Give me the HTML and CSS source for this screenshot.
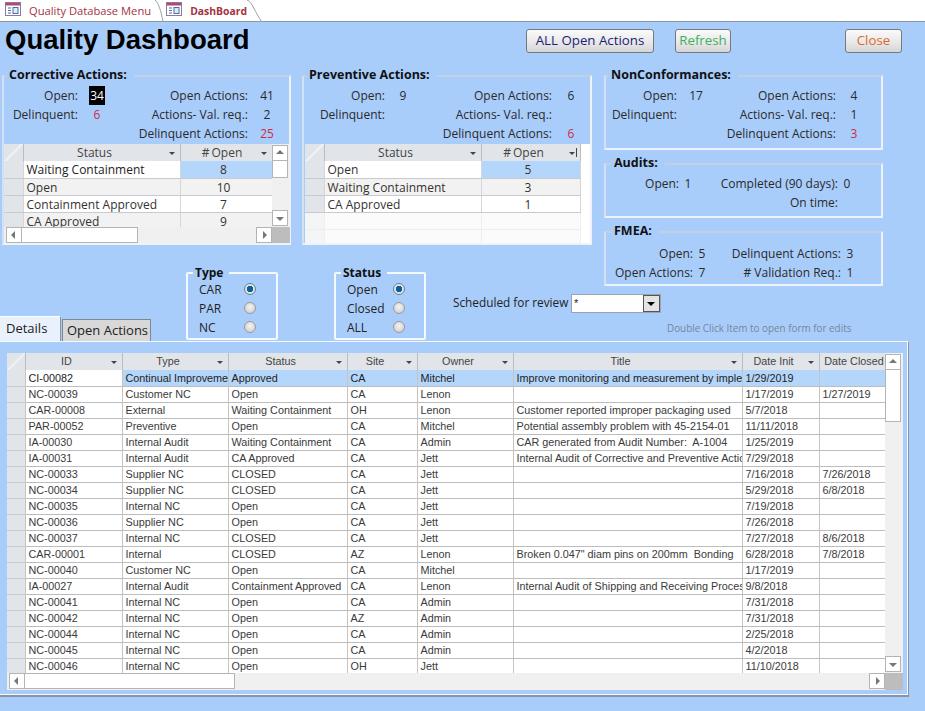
FILE: index.html
```html
<!DOCTYPE html>
<html lang="en">
<head>
<meta charset="utf-8">
<title>Quality Dashboard</title>
<link rel="stylesheet" href="styles.css">
</head>
<body>
<div class="app">
  <nav class="doctabs">
    <div class="doctab">
      <svg class="formicon" viewBox="0 0 16 14" width="16" height="14"><rect x="0.5" y="0.5" width="15" height="13" fill="#fff" stroke="#8a7a9e"/><rect x="1" y="1" width="14" height="2.5" fill="#b8476e"/><path d="M3 6h3M3 8.5h3M3 11h3" stroke="#4a6fa8"/><rect x="8" y="5.5" width="5" height="6" fill="#dfe8f5" stroke="#4a6fa8"/></svg>
      <span>Quality Database Menu</span>
      <svg class="tabcurve" viewBox="0 0 9 22" width="9" height="22"><path d="M0 0 C3 2 6 10 8 22" fill="none" stroke="#9aa0a8"/></svg>
    </div>
    <div class="doctab active">
      <svg class="formicon" viewBox="0 0 16 14" width="16" height="14"><rect x="0.5" y="0.5" width="15" height="13" fill="#fff" stroke="#8a7a9e"/><rect x="1" y="1" width="14" height="2.5" fill="#b8476e"/><path d="M3 6h3M3 8.5h3M3 11h3" stroke="#4a6fa8"/><rect x="8" y="5.5" width="5" height="6" fill="#dfe8f5" stroke="#4a6fa8"/></svg>
      <span>DashBoard</span>
      <svg class="tabcurve" viewBox="0 0 15 22" width="15" height="22"><path d="M0 0 C5 1 8 13 15 22" fill="none" stroke="#9aa0a8"/></svg>
    </div>
  </nav>

  <main class="form">
    <header class="formhead">
      <h1 class="title">Quality Dashboard</h1>
      <button class="btn btn-all">ALL Open Actions</button>
      <button class="btn btn-refresh">Refresh</button>
      <button class="btn btn-close">Close</button>
    </header>

    <section class="panels">
      <fieldset class="panel panel-ca">
        <legend>Corrective Actions:</legend>
        <div class="stats stats-ca">
          <span class="lab">Open:</span><span class="val"><b class="sel">34</b></span><span class="lab">Open Actions:</span><span class="val">41</span>
          <span class="lab">Delinquent:</span><span class="val red">6</span><span class="lab">Actions- Val. req.:</span><span class="val">2</span>
          <span></span><span></span><span class="lab">Delinquent Actions:</span><span class="val red">25</span>
        </div>
        <div class="minisheet with-scroll">
          <div class="miniclip">
            <table class="grid">
              <colgroup><col class="m-sel"><col class="m-status"><col class="m-open"></colgroup>
              <thead><tr><th class="corner-th"></th><th class="sort">Status</th><th class="sort narrow">#&#8201;Open</th></tr></thead>
              <tbody>
                <tr><td class="rowsel"></td><td class="strong">Waiting Containment</td><td class="num hl">8</td></tr>
                <tr class="alt"><td class="rowsel"></td><td>Open</td><td class="num">10</td></tr>
                <tr><td class="rowsel"></td><td>Containment Approved</td><td class="num">7</td></tr>
                <tr class="alt"><td class="rowsel"></td><td>CA Approved</td><td class="num">9</td></tr>
              </tbody>
            </table>
          </div>
          <div class="vbar">
            <i class="sbtn up"></i><i class="vthumb mini"></i><i class="vspace"></i><i class="sbtn down"></i>
          </div>
          <div class="hbar">
            <i class="sbtn left"></i><i class="hthumb mini"></i><i class="hspace"></i><i class="sbtn right"></i>
          </div>
          <i class="corner"></i>
        </div>
      </fieldset>

      <fieldset class="panel panel-pa">
        <legend>Preventive Actions:</legend>
        <div class="stats stats-pa">
          <span class="lab">Open:</span><span class="val">9</span><span class="lab">Open Actions:</span><span class="val">6</span>
          <span class="lab">Delinquent:</span><span class="val"></span><span class="lab">Actions- Val. req.:</span><span class="val"></span>
          <span></span><span></span><span class="lab">Delinquent Actions:</span><span class="val red">6</span>
        </div>
        <div class="minisheet plain">
          <table class="grid">
            <colgroup><col class="m-sel"><col class="m-status"><col class="m-open2"></colgroup>
            <thead><tr><th class="corner-th"></th><th class="sort">Status</th><th class="sort sorted">#&#8201;Open</th></tr></thead>
            <tbody>
              <tr><td class="rowsel"></td><td>Open</td><td class="num hl">5</td></tr>
              <tr class="alt"><td class="rowsel"></td><td>Waiting Containment</td><td class="num">3</td></tr>
              <tr><td class="rowsel"></td><td>CA Approved</td><td class="num">1</td></tr>
              <tr class="empty"><td class="rowsel-e"></td><td></td><td></td></tr>
              <tr class="empty"><td class="rowsel-e"></td><td></td><td></td></tr>
            </tbody>
          </table>
        </div>
      </fieldset>

      <div class="sidepanels">
        <fieldset class="panel panel-nc">
          <legend>NonConformances:</legend>
          <div class="stats stats-nc">
            <span class="lab">Open:</span><span class="val">17</span><span class="lab">Open Actions:</span><span class="val">4</span>
            <span class="lab">Delinquent:</span><span class="val"></span><span class="lab">Actions- Val. req.:</span><span class="val">1</span>
            <span></span><span></span><span class="lab">Delinquent Actions:</span><span class="val red">3</span>
          </div>
        </fieldset>
        <fieldset class="panel panel-au">
          <legend>Audits:</legend>
          <div class="stats stats-au">
            <span class="lab">Open:</span><span class="val">1</span><span class="lab">Completed (90 days):</span><span class="val">0</span>
            <span></span><span></span><span class="lab">On time:</span><span class="val"></span>
          </div>
        </fieldset>
        <fieldset class="panel panel-fm">
          <legend>FMEA:</legend>
          <div class="stats stats-fm">
            <span class="lab">Open:</span><span class="val">5</span><span class="lab">Delinquent Actions:</span><span class="val">3</span>
            <span class="lab">Open Actions:</span><span class="val">7</span><span class="lab"># Validation Req.:</span><span class="val">1</span>
          </div>
        </fieldset>
      </div>
    </section>

    <section class="filters">
      <div class="pagetabs">
        <div class="pagetab active">Details</div>
        <div class="pagetab">Open Actions</div>
      </div>
      <fieldset class="panel optgroup opt-type">
        <legend>Type</legend>
        <div class="opt"><span>CAR</span><i class="radio on"></i></div>
        <div class="opt"><span>PAR</span><i class="radio"></i></div>
        <div class="opt"><span>NC</span><i class="radio"></i></div>
      </fieldset>
      <fieldset class="panel optgroup opt-status">
        <legend>Status</legend>
        <div class="opt"><span>Open</span><i class="radio on"></i></div>
        <div class="opt"><span>Closed</span><i class="radio"></i></div>
        <div class="opt"><span>ALL</span><i class="radio"></i></div>
      </fieldset>
      <div class="review">
        <div class="reviewrow">
          <label class="reviewlab">Scheduled for review</label>
          <div class="combo"><span class="comboval">*</span><i class="combobtn"></i></div>
        </div>
        <p class="hint">Double Click Item to open form for edits</p>
      </div>
    </section>

    <section class="tabpage">
      <div class="sheet">
        <div class="sheetclip">
          <table class="grid data">
            <colgroup><col class="d-sel"><col class="d-id"><col class="d-type"><col class="d-status"><col class="d-site"><col class="d-owner"><col class="d-title"><col class="d-init"><col class="d-closed"></colgroup>
            <thead>
              <tr><th class="corner-th"></th><th class="sort">ID</th><th class="sort">Type</th><th class="sort">Status</th><th class="sort">Site</th><th class="sort">Owner</th><th class="sort">Title</th><th class="sort">Date Init</th><th class="closedhead">Date Closed</th></tr>
            </thead>
            <tbody>
              <tr class="current"><td class="rowsel"></td><td class="idcell">CI-00082</td><td>Continual Improvement</td><td>Approved</td><td>CA</td><td>Mitchel</td><td>Improve monitoring and measurement by implementing</td><td>1/29/2019</td><td></td></tr>
              <tr><td class="rowsel"></td><td>NC-00039</td><td>Customer NC</td><td>Open</td><td>CA</td><td>Lenon</td><td></td><td>1/17/2019</td><td>1/27/2019</td></tr>
              <tr><td class="rowsel"></td><td>CAR-00008</td><td>External</td><td>Waiting Containment</td><td>OH</td><td>Lenon</td><td>Customer reported improper packaging used</td><td>5/7/2018</td><td></td></tr>
              <tr><td class="rowsel"></td><td>PAR-00052</td><td>Preventive</td><td>Open</td><td>CA</td><td>Mitchel</td><td>Potential assembly problem with 45-2154-01</td><td>11/11/2018</td><td></td></tr>
              <tr><td class="rowsel"></td><td>IA-00030</td><td>Internal Audit</td><td>Waiting Containment</td><td>CA</td><td>Admin</td><td>CAR generated from Audit Number:&nbsp; A-1004</td><td>1/25/2019</td><td></td></tr>
              <tr><td class="rowsel"></td><td>IA-00031</td><td>Internal Audit</td><td>CA Approved</td><td>CA</td><td>Jett</td><td>Internal Audit of Corrective and Preventive Actions</td><td>7/29/2018</td><td></td></tr>
              <tr><td class="rowsel"></td><td>NC-00033</td><td>Supplier NC</td><td>CLOSED</td><td>CA</td><td>Jett</td><td></td><td>7/16/2018</td><td>7/26/2018</td></tr>
              <tr><td class="rowsel"></td><td>NC-00034</td><td>Supplier NC</td><td>CLOSED</td><td>CA</td><td>Jett</td><td></td><td>5/29/2018</td><td>6/8/2018</td></tr>
              <tr><td class="rowsel"></td><td>NC-00035</td><td>Internal NC</td><td>Open</td><td>CA</td><td>Jett</td><td></td><td>7/19/2018</td><td></td></tr>
              <tr><td class="rowsel"></td><td>NC-00036</td><td>Supplier NC</td><td>Open</td><td>CA</td><td>Jett</td><td></td><td>7/26/2018</td><td></td></tr>
              <tr><td class="rowsel"></td><td>NC-00037</td><td>Internal NC</td><td>CLOSED</td><td>CA</td><td>Jett</td><td></td><td>7/27/2018</td><td>8/6/2018</td></tr>
              <tr><td class="rowsel"></td><td>CAR-00001</td><td>Internal</td><td>CLOSED</td><td>AZ</td><td>Lenon</td><td>Broken 0.047" diam pins on 200mm&nbsp; Bonding</td><td>6/28/2018</td><td>7/8/2018</td></tr>
              <tr><td class="rowsel"></td><td>NC-00040</td><td>Customer NC</td><td>Open</td><td>CA</td><td>Mitchel</td><td></td><td>1/17/2019</td><td></td></tr>
              <tr><td class="rowsel"></td><td>IA-00027</td><td>Internal Audit</td><td>Containment Approved</td><td>CA</td><td>Lenon</td><td>Internal Audit of Shipping and Receiving Process</td><td>9/8/2018</td><td></td></tr>
              <tr><td class="rowsel"></td><td>NC-00041</td><td>Internal NC</td><td>Open</td><td>CA</td><td>Admin</td><td></td><td>7/31/2018</td><td></td></tr>
              <tr><td class="rowsel"></td><td>NC-00042</td><td>Internal NC</td><td>Open</td><td>AZ</td><td>Admin</td><td></td><td>7/31/2018</td><td></td></tr>
              <tr><td class="rowsel"></td><td>NC-00044</td><td>Internal NC</td><td>Open</td><td>CA</td><td>Admin</td><td></td><td>2/25/2018</td><td></td></tr>
              <tr><td class="rowsel"></td><td>NC-00045</td><td>Internal NC</td><td>Open</td><td>CA</td><td>Admin</td><td></td><td>4/2/2018</td><td></td></tr>
              <tr><td class="rowsel"></td><td>NC-00046</td><td>Internal NC</td><td>Open</td><td>OH</td><td>Jett</td><td></td><td>11/10/2018</td><td></td></tr>
            </tbody>
          </table>
        </div>
        <div class="vbar">
          <i class="sbtn up"></i><i class="vthumb big"></i><i class="vspace"></i><i class="sbtn down"></i>
        </div>
        <div class="hbar">
          <i class="sbtn left"></i><i class="hthumb big"></i><i class="hspace"></i><i class="sbtn right"></i>
        </div>
        <i class="corner"></i>
      </div>
    </section>
  </main>
</div>
</body>
</html>
```

FILE: styles.css
```css
* { box-sizing: border-box; }
html, body { margin: 0; padding: 0; }
body {
  width: 925px;
  height: 711px;
  overflow: hidden;
  background: #a9cdfb;
  font-family: "Open Sans", "Noto Sans", sans-serif;
  font-size: 12px;
  color: #222;
}
i { display: block; font-style: normal; }

/* document tabs */
.doctabs {
  height: 22px;
  display: flex;
  background: #fff;
  border-bottom: 1px solid #8c98a8;
}
.doctab {
  display: flex;
  align-items: center;
  height: 21px;
  padding-left: 5px;
  color: #a5323f;
  font-size: 11.2px;
  background: #fff;
}
.doctab span { margin-left: 8px; white-space: nowrap; }
.doctab .tabcurve { margin-left: 4px; flex: none; align-self: flex-start; }
.doctab.active { font-weight: 700; font-size: 10.4px; padding-left: 2px; }
.doctab.active .tabcurve { margin-left: 0; }
.formicon { flex: none; margin-top: -3px; }

/* form */
.form { display: block; }
.formhead {
  height: 45px;
  display: flex;
  align-items: flex-start;
  padding-top: 7px;
}
.title {
  flex: 0 0 526px;
  margin: 0;
  padding-left: 5px;
  font-family: "Liberation Sans", Arial, sans-serif;
  font-size: 27.5px;
  line-height: 22px;
  font-weight: 700;
  color: #000;
  white-space: nowrap;
}
.btn {
  height: 24px;
  padding: 0 0 2px;
  border: 1px solid #75797f;
  border-radius: 3px;
  background: linear-gradient(#fafafa, #ececec 45%, #d6d6d6);
  font-family: "Open Sans", "Noto Sans", sans-serif;
  font-size: 13.3px;
  line-height: 18px;
}
.btn-all { width: 128px; color: #1d1d78; }
.btn-refresh { width: 56px; margin-left: 21px; color: #3fb05c; }
.btn-close { width: 57px; margin-left: 114px; color: #dc6a2c; }

/* panels */
.panel {
  margin: 0;
  padding: 0;
  min-width: 0;
  border: 2px solid;
  border-color: #c3d0e2 #eef3fb #eef3fb #d3e0f2;
}
.panel legend {
  margin-left: 2px;
  padding: 0 7px 2px 3px;
  font-size: 12.5px;
  font-weight: 700;
  line-height: 16px;
  color: #111;
}
.panel-au legend, .panel-fm legend { margin-left: 5px; }
.panels {
  display: flex;
  align-items: flex-start;
  padding-left: 2px;
}
.panel-ca { width: 289px; height: 178px; }
.panel-pa { width: 290px; height: 178px; margin-left: 11px; }
.sidepanels {
  width: 279px;
  margin-left: 12px;
  display: flex;
  flex-direction: column;
}
.panel-nc { height: 83px; }
.panel-au { height: 63px; margin-top: 5px; }
.panel-fm { height: 63px; margin-top: 5px; }

.stats {
  display: grid;
  grid-auto-rows: 19px;
  align-items: center;
  padding-top: 1px;
  line-height: 19px;
  white-space: nowrap;
  color: #2a2a2a;
}
.stats-ca { grid-template-columns: 74px 38px 132px 38px; }
.stats-pa { grid-template-columns: 81px 36px 131px 38px; }
.stats-nc { grid-template-columns: 71px 38px 121px 36px; }
.stats-au { grid-template-columns: 73px 18px 141px 18px; }
.stats-fm { grid-template-columns: 87px 18px 130px 18px; padding-top: 3px; }
.lab { text-align: right; }
.val { display: block; text-align: center; }
.red { color: #d02a44; }
.sel {
  font-weight: 400;
  background: #000;
  color: #fff;
  padding: 1px;
}

/* data grids */
.grid {
  table-layout: fixed;
  border-collapse: collapse;
  width: 100%;
  font-size: 12px;
  color: #333;
}
.grid th {
  position: relative;
  height: 17px;
  padding: 0 14px 0 0;
  font-weight: 400;
  line-height: 15px;
  text-align: center;
  background: #e1e4e8;
  border-right: 1px solid #b9bcc0;
  color: #444;
}
.grid th.narrow { padding-right: 8px; }
.grid th.closedhead { padding: 0 0 0 4px; white-space: nowrap; }
.grid td {
  height: 17px;
  padding: 1px 3px 0;
  line-height: 15px;
  white-space: nowrap;
  overflow: hidden;
  border-bottom: 1px solid #c8cacd;
  border-right: 1px solid #d4d6d9;
  background: #fff;
}
.grid .alt td { background: #f2f2f2; }
.grid .alt td.rowsel, .grid td.rowsel { background: #e1e4e8; border-bottom-color: #c8cacd; padding: 0; }
.grid .num { text-align: center; padding-right: 8px; }
.grid td.hl { background: #b5d6fb; }
.grid .strong { color: #222; }
.corner-th {
  background: linear-gradient(135deg, #e1e4e8 45%, #f4f5f6 50%, #e1e4e8 58%) !important;
}
.sort::after {
  content: "";
  position: absolute;
  right: 5px;
  top: 8px;
  border: 3px solid transparent;
  border-top: 3px solid #444;
  border-bottom: 0;
}
.sorted::before {
  content: "";
  position: absolute;
  right: 3px;
  top: 4px;
  width: 1px;
  height: 9px;
  background: #444;
}
.empty td { background: #fbfbfb !important; border-bottom-color: #eee; border-right-color: #eee; height: 17px; }
.empty .rowsel-e { background: #f4f5f6 !important; }

col.m-sel { width: 19px; }
col.m-status { width: 157px; }
col.m-open { width: 92px; }
col.m-open2 { width: 99px; }

.minisheet { background: #f0f0f0; }
.with-scroll {
  margin-top: 1px;
  width: 286px;
  height: 99px;
  display: grid;
  grid-template-columns: 268px 18px;
  grid-template-rows: 83px 16px;
}
.miniclip { overflow: hidden; background: #fff; }
.plain {
  margin: 1px 0 0 1px;
  width: 285px;
  height: 99px;
  overflow: hidden;
  background: #fff;
}
.plain .grid { width: 275px; }

/* scrollbars */
.vbar {
  display: flex;
  flex-direction: column;
  background: #f0f0f0;
  padding: 1px 1px 1px 0;
}
.hbar {
  display: flex;
  background: #f0f0f0;
  padding: 0 0 1px 2px;
}
.vspace, .hspace { flex: 1; }
.sbtn {
  position: relative;
  flex: none;
  width: 16px;
  height: 16px;
  background: #fff;
  border: 1px solid #b4b4b4;
}
.sbtn::after {
  content: "";
  position: absolute;
  left: 50%;
  top: 50%;
  width: 0;
  height: 0;
}
.sbtn.up::after { margin: -3px 0 0 -4px; border: 4px solid transparent; border-bottom: 4px solid #777; border-top: 0; }
.sbtn.down::after { margin: -1px 0 0 -4px; border: 4px solid transparent; border-top: 4px solid #777; border-bottom: 0; }
.sbtn.left::after { margin: -4px 0 0 -3px; border: 4px solid transparent; border-right: 4px solid #777; border-left: 0; }
.sbtn.right::after { margin: -4px 0 0 -1px; border: 4px solid transparent; border-left: 4px solid #777; border-right: 0; }
.vthumb { width: 16px; background: #fff; border: 1px solid #b4b4b4; border-top: 0; }
.hthumb { height: 16px; background: #fff; border: 1px solid #b4b4b4; border-left: 0; }
.vthumb.mini { height: 17px; }
.hthumb.mini { width: 116px; }
.vthumb.big { height: 52px; }
.hthumb.big { width: 210px; }
.corner { background: #bdbdbd; }

/* filters */
.filters {
  display: flex;
  align-items: flex-start;
  margin-top: -21px;
  height: 76px;
}
.pagetabs {
  flex: 0 0 186px;
  display: flex;
  align-items: flex-end;
  height: 76px;
}
.pagetab {
  width: 89px;
  height: 22px;
  margin-left: 1px;
  padding-left: 4px;
  line-height: 21px;
  font-size: 13px;
  color: #222;
  background: #d8d8d8;
  border: 1px solid #7d8793;
  border-bottom: 0;
}
.pagetab.active {
  width: 61px;
  height: 25px;
  margin-left: 0;
  padding-left: 6px;
  line-height: 22px;
  background: #e9f1fc;
  border: 0;
  border-top: 1px solid #fff;
  border-right: 1px solid #8a94a0;
}
.panel.optgroup {
  width: 92px;
  height: 75px;
  border-color: #f4f8ff;
  border-radius: 2px;
}
.panel.optgroup legend {
  margin-left: 5px;
  padding: 0 6px 0 2px;
  font-size: 12px;
}
.opt-status { margin-left: 56px; }
.opt {
  display: flex;
  align-items: center;
  justify-content: space-between;
  height: 19px;
  padding: 0 20px 0 11px;
}
.opt:first-of-type { margin-top: -1px; }
.opt-status .opt { padding-right: 19px; }
.radio {
  width: 12px;
  height: 12px;
  margin-top: -2px;
  border-radius: 50%;
  border: 1px solid #9a9a9a;
  background: radial-gradient(circle at 50% 40%, #f4f4f4, #c8c8c8);
}
.radio.on {
  background: radial-gradient(circle, #0a5f9c 0 3px, #dfe6ea 3.5px);
  border-color: #6f7f8a;
}
.review { margin-left: 27px; padding-top: 29px; width: 400px; }
.reviewrow { display: flex; align-items: center; height: 19px; }
.reviewlab { width: 118px; margin-top: -4px; font-size: 11.8px; white-space: nowrap; }
.combo {
  width: 90px;
  height: 19px;
  display: flex;
  justify-content: space-between;
  background: #fff;
  border: 1px solid #9aa4b0;
}
.comboval { padding-left: 2px; line-height: 16px; font-family: "Liberation Sans", Arial, sans-serif; font-size: 11px; }
.combobtn {
  position: relative;
  width: 17px;
  background: #e4e4e4;
  border: 1px solid #555;
}
.combobtn::after {
  content: "";
  position: absolute;
  left: 3px;
  top: 6px;
  border: 4px solid transparent;
  border-top: 4px solid #000;
  border-bottom: 0;
}
.hint {
  margin: 8px 0 0 214px;
  font-size: 9.9px;
  line-height: 14px;
  color: #78859a;
  white-space: nowrap;
}

/* tab page */
.tabpage {
  width: 909px;
  height: 356px;
  padding: 11px 5px 5px 7px;
  border-top: 1px solid #f4f8ff;
  border-right: 1px solid #8a94a0;
  border-bottom: 2px solid #8a94a0;
  box-shadow: inset -1px -1px 0 #f4f8ff;
}
.sheet {
  width: 896px;
  height: 337px;
  display: grid;
  grid-template-columns: 878px 18px;
  grid-template-rows: 320px 17px;
  background: #f0f0f0;
}
.sheetclip { overflow: hidden; background: #f0f0f0; }
.data {
  font-family: "Liberation Sans", Arial, sans-serif;
  font-size: 10.8px;
  color: #3a3a3a;
}
.data th { height: 17px; font-size: 10.8px; }
.data td { height: 16px; padding: 0 3px; line-height: 15px; border-bottom-color: #bdbdbd; border-right-color: #c4c4c4; }
.data .current td { padding-top: 1px; background: #b5d6fb; color: #222; }
.data .current td.rowsel { background: #e1e4e8; }
.data .current td.idcell { background: #fff; }
col.d-sel { width: 18px; }
col.d-id { width: 97px; }
col.d-type { width: 106px; }
col.d-status { width: 119px; }
col.d-site { width: 70px; }
col.d-owner { width: 96px; }
col.d-title { width: 229px; }
col.d-init { width: 77px; }
col.d-closed { width: 66px; }
```
